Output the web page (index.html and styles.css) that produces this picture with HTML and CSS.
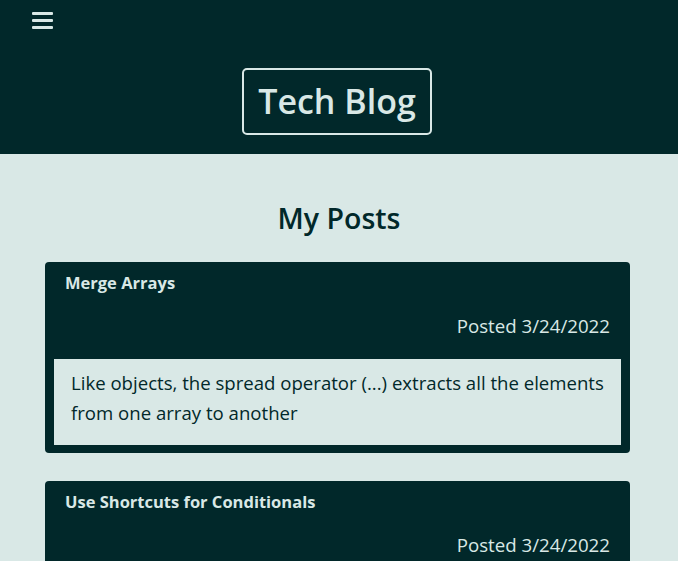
FILE: index.html
```html
<!DOCTYPE html>
<html>
<head>
<meta charset="utf-8">
<link rel="stylesheet" href="styles.css">
</head>
<body>
<header class="site-header">
  <div class="menu-btn" aria-label="menu">
    <span></span><span></span><span></span>
  </div>
  <div class="brand-wrap">
    <h1 class="brand">Tech Blog</h1>
  </div>
</header>
<main class="content">
  <h2 class="page-title">My Posts</h2>
  <article class="post">
    <h3 class="post-title">Merge Arrays</h3>
    <p class="post-date">Posted 3/24/2022</p>
    <div class="post-body">Like objects, the spread operator (...) extracts all the elements from one array to another</div>
  </article>
  <article class="post">
    <h3 class="post-title">Use Shortcuts for Conditionals</h3>
    <p class="post-date">Posted 3/24/2022</p>
    <div class="post-body">Use shortcuts for conditionals to make code shorter and easier to read</div>
  </article>
</main>
</body>
</html>
```
FILE: styles.css
```css
* { box-sizing: border-box; }
html, body { margin: 0; padding: 0; }
body {
  background: #d9e8e6;
  font-family: "Open Sans", "Noto Sans", sans-serif;
  color: #01282a;
}
.site-header {
  background: #01282a;
  height: 154px;
  padding-top: 12px;
}
.menu-btn {
  margin-left: 32px;
  width: 21px;
  display: flex;
  flex-direction: column;
  gap: 4px;
}
.menu-btn span {
  display: block;
  height: 3px;
  background: #d9e8e6;
  border-radius: 1px;
}
.brand-wrap {
  display: flex;
  justify-content: center;
  margin-top: 39px;
}
.brand {
  margin: 0;
  color: #d9e8e6;
  font-size: 34px;
  font-weight: 600;
  line-height: 63px;
  padding: 0 14px;
  border: 2px solid #d9e8e6;
  border-radius: 5px;
  margin-right: 4px;
}
.page-title {
  margin: 0;
  padding-top: 45px;
  text-align: center;
  font-size: 28.5px;
  font-weight: 600;
  line-height: 38px;
  margin-bottom: 25px;
}
.post {
  width: 585px;
  margin: 0 0 28px 45px;
  background: #01282a;
  border-radius: 4px;
  padding: 10px 9px 8px 9px;
}
.post-title {
  margin: 0;
  padding-left: 11px;
  color: #d9e8e6;
  font-size: 16.5px;
  font-weight: 700;
  line-height: 22px;
}
.post-date {
  margin: 0;
  padding: 20px 11px 0 0;
  text-align: right;
  color: #d9e8e6;
  font-size: 18.7px;
  line-height: 24px;
  margin-bottom: 21px;
}
.post-body {
  background: #d9e8e6;
  color: #01282a;
  font-size: 18.6px;
  line-height: 30px;
  padding: 9px 16px 17px 17px;
}
```
